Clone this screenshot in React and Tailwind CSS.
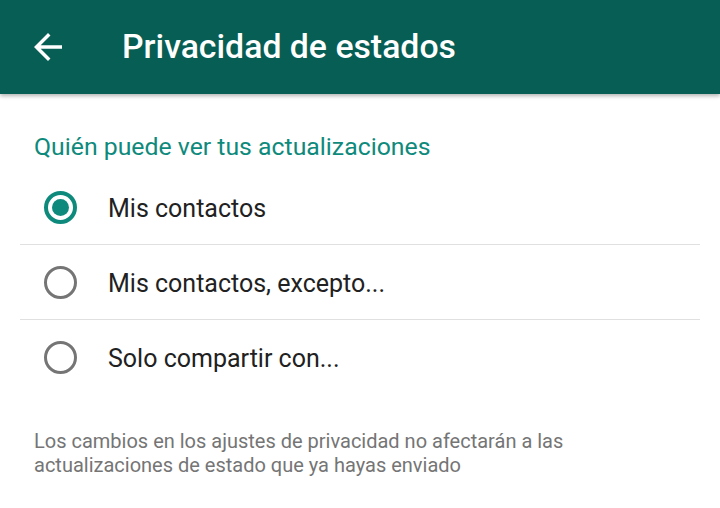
import { useState } from 'react'

const OPTIONS = ['Mis contactos', 'Mis contactos, excepto...', 'Solo compartir con...']

function Radio({ checked }) {
  return checked ? (
    <span className="flex h-[33px] w-[33px] items-center justify-center rounded-full border-[4px] border-[#0e8a7c]">
      <span className="block h-[17px] w-[17px] rounded-full bg-[#0e8a7c]" />
    </span>
  ) : (
    <span className="block h-[33px] w-[33px] rounded-full border-[3px] border-[#757575]" />
  )
}

export default function App() {
  const [selected, setSelected] = useState(0)

  return (
    <div className="h-[508px] w-[720px] overflow-hidden bg-white font-['Roboto',sans-serif]">
      {/* toolbar */}
      <div className="relative z-10 flex h-[94px] items-center bg-[#075e54] shadow-[0_2px_4px_rgba(0,0,0,0.3)]">
        <button className="ml-[27px] flex h-[42px] w-[42px] items-center justify-center text-white">
          <svg width="42" height="42" viewBox="0 0 24 24" fill="currentColor">
            <path d="M20 11H7.83l5.59-5.59L12 4l-8 8 8 8 1.41-1.41L7.83 13H20v-2z" />
          </svg>
        </button>
        <h1 className="ml-[53px] text-[33.8px] font-medium leading-none text-white">Privacidad de estados</h1>
      </div>

      {/* options */}
      <div className="px-5 pt-[38px]">
        <h2 className="pl-[14px] text-[24.8px] leading-[30px] text-[#0e8a7c]">Quién puede ver tus actualizaciones</h2>
        <div className="mt-[8px]">
          {OPTIONS.map((label, i) => (
            <div
              key={label}
              onClick={() => setSelected(i)}
              className={`flex h-[75px] cursor-pointer items-center ${i < OPTIONS.length - 1 ? 'border-b border-[#e0e0e0]' : ''}`}
            >
              <div className="ml-[24px] w-[64px]">
                <Radio checked={selected === i} />
              </div>
              <span className="pt-[3px] text-[25px] text-[#212121]">{label}</span>
            </div>
          ))}
        </div>
        <p className="mt-[34px] pl-[14px] text-[20px] leading-[24px] text-[#757575]">
          Los cambios en los ajustes de privacidad no afectarán a las
          <br />
          actualizaciones de estado que ya hayas enviado
        </p>
      </div>
    </div>
  )
}
